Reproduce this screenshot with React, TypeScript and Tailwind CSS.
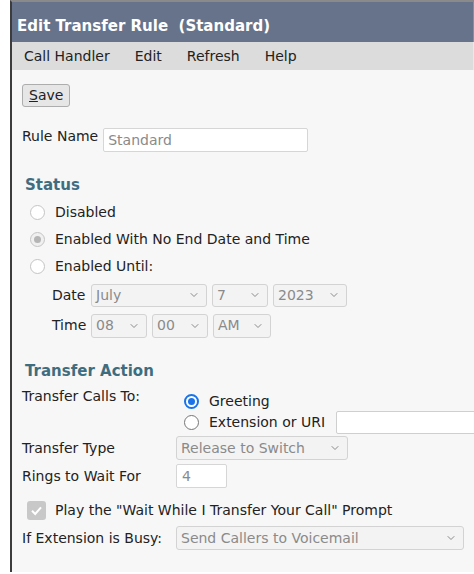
import { ChevronDown } from "lucide-react";

const font = { fontFamily: '"DejaVu Sans", Verdana, sans-serif' };

function Radio({ checked, tone }: { checked?: boolean; tone?: "blue" | "gray" }) {
	if (checked && tone === "blue") {
		return (
			<span className="w-[15px] h-[15px] rounded-full border-2 border-[#1a73e8] bg-white flex items-center justify-center shrink-0">
				<span className="w-[7px] h-[7px] rounded-full bg-[#1a73e8]" />
			</span>
		);
	}
	if (checked) {
		return (
			<span className="w-[15px] h-[15px] rounded-full border border-[#c4c4c4] bg-[#f0f0f0] flex items-center justify-center shrink-0">
				<span className="w-[7px] h-[7px] rounded-full bg-[#b5b5b5]" />
			</span>
		);
	}
	return (
		<span
			className={`w-[15px] h-[15px] rounded-full border bg-white shrink-0 ${tone === "blue" ? "border-[#767676] border-[1.5px]" : "border-[#c4c4c4]"}`}
		/>
	);
}

function Select({
	value,
	width,
	height = "h-[23px]",
}: {
	value: string;
	width: string;
	height?: string;
}) {
	return (
		<div
			className={`${width} ${height} shrink-0 flex items-center justify-between pl-[4px] pr-[6px] bg-[#f3f3f3] border border-[#d3d3d3] rounded-[3px] text-[#8a8a8a]`}
		>
			<span>{value}</span>
			<ChevronDown size={12} strokeWidth={2} className="text-[#8a8a8a]" />
		</div>
	);
}

export default function App() {
	return (
		<div
			className="w-[474px] h-[574px] bg-white flex overflow-hidden text-[14px] text-[#222]"
			style={font}
		>
			<div className="w-[10px] shrink-0" />
			<div className="flex-1 min-w-0 flex flex-col border-l-2 border-[#3c3c3c] border-t-2 border-t-[#8a8a8a] bg-[#f7f7f7] mb-[2px] overflow-hidden">
				<div className="h-[40px] bg-[#67738a] flex items-center pl-[5px] pt-[9px] border-r border-[#8590a3]">
					<span className="text-white font-bold text-[15px] whitespace-pre">
						Edit Transfer Rule  (Standard)
					</span>
				</div>
				<div className="h-[28px] bg-[#dcdcdc] flex items-center pl-[12px] gap-[25px] border-r border-[#e9e9e9]">
					<span>Call Handler</span>
					<span>Edit</span>
					<span>Refresh</span>
					<span>Help</span>
				</div>

				<div className="flex flex-col pl-[10px] pt-[14px]">
					<div>
						<button
							type="button"
							className="h-[23px] px-[6px] bg-[#e6e6e6] border border-[#adadad] rounded-[3px] text-[14px] text-[#222]"
						>
							<span className="underline">S</span>ave
						</button>
					</div>

					<div className="flex items-start gap-[5px] mt-[21px]">
						<span className="leading-[17px]">Rule Name</span>
						<div className="w-[205px] h-[24px] bg-white border border-[#d6d6d6] rounded-[2px] flex items-center pl-[4px] text-[#8a8a8a]">
							Standard
						</div>
					</div>

					<div className="mt-[22px] pl-[3px] font-bold text-[#3f6d80] text-[15px]">
						Status
					</div>

					<div className="flex flex-col gap-[8px] mt-[6px] pl-[8px]">
						<div className="flex items-center gap-[10px] h-[19px]">
							<Radio />
							<span>Disabled</span>
						</div>
						<div className="flex items-center gap-[10px] h-[19px]">
							<Radio checked />
							<span>Enabled With No End Date and Time</span>
						</div>
						<div className="flex items-center gap-[10px] h-[19px]">
							<Radio />
							<span>Enabled Until:</span>
						</div>
					</div>

					<div className="flex flex-col gap-[7px] mt-[8px] pl-[30px]">
						<div className="flex items-center gap-[5px]">
							<span className="w-[34px]">Date</span>
							<Select value="July" width="w-[116px]" />
							<Select value="7" width="w-[56px]" />
							<Select value="2023" width="w-[74px]" />
						</div>
						<div className="flex items-center gap-[5px]">
							<span className="w-[34px]">Time</span>
							<Select value="08" width="w-[56px]" height="h-[24px]" />
							<Select value="00" width="w-[56px]" height="h-[24px]" />
							<Select value="AM" width="w-[58px]" height="h-[24px]" />
						</div>
					</div>

					<div className="mt-[22px] pl-[3px] font-bold text-[#3f6d80] text-[15px]">
						Transfer Action
					</div>

					<div className="flex items-start mt-[4px]">
						<span className="w-[161px] shrink-0">Transfer Calls To:</span>
						<div className="flex flex-col pt-[6px] pl-[1px]">
							<div className="flex items-center gap-[10px] h-[18px]">
								<Radio checked tone="blue" />
								<span>Greeting</span>
							</div>
							<div className="flex items-center gap-[10px] h-[24px]">
								<Radio tone="blue" />
								<span className="whitespace-nowrap">Extension or URI</span>
								<div className="w-[150px] h-[23px] shrink-0 bg-white border border-[#cfcfcf] rounded-[2px] ml-[1px]" />
							</div>
						</div>
					</div>

					<div className="flex items-center mt-[2px]">
						<span className="w-[154px]">Transfer Type</span>
						<Select value="Release to Switch" width="w-[172px]" height="h-[24px]" />
					</div>

					<div className="flex items-center mt-[4px]">
						<span className="w-[154px]">Rings to Wait For</span>
						<div className="w-[51px] h-[24px] bg-white border border-[#d6d6d6] rounded-[2px] flex items-center pl-[5px] text-[#8a8a8a]">
							4
						</div>
					</div>

					<div className="flex items-center gap-[9px] mt-[12px] pl-[5px]">
						<span className="w-[19px] h-[19px] rounded-[3px] bg-[#c8c8c8] flex items-center justify-center">
							<svg width="13" height="13" viewBox="0 0 13 13">
								<path d="M2 6.8 L5.2 10 L11 3.4" fill="none" stroke="white" strokeWidth="2" />
							</svg>
						</span>
						<span>Play the "Wait While I Transfer Your Call" Prompt</span>
					</div>

					<div className="flex items-center mt-[5px]">
						<span className="w-[154px]">If Extension is Busy:</span>
						<Select value="Send Callers to Voicemail" width="w-[288px]" height="h-[24px]" />
					</div>
				</div>
			</div>
		</div>
	);
}
